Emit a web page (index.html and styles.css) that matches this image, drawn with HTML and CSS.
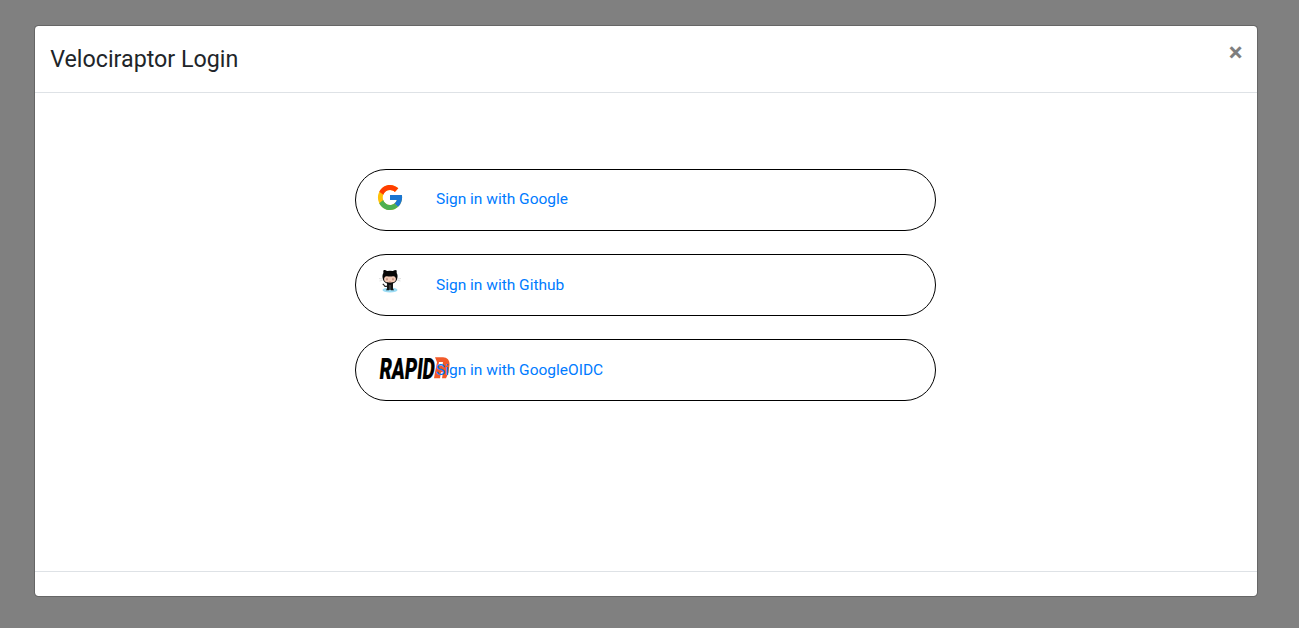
FILE: index.html
```html
<!DOCTYPE html>
<html lang="en">
<head>
<meta charset="utf-8">
<title>Velociraptor Login</title>
<link rel="stylesheet" href="styles.css">
</head>
<body>
<div class="modal" role="dialog" aria-labelledby="title">
  <header class="modal-header">
    <h1 class="modal-title" id="title">Velociraptor Login</h1>
    <button class="close" type="button" aria-label="Close">×</button>
  </header>
  <main class="modal-body">
    <a class="provider" href="#">
      <span class="logo"><svg class="google" viewBox="0.8 -0.8 48 48" width="29" height="30" preserveAspectRatio="none">
        <path fill="#FFC107" d="M43.6 20.1H42V20H24v8h11.300C33.700 32.700 29.200 36 24 36c-6.600 0-12-5.400-12-12s5.400-12 12-12c3.100 0 5.800 1.200 8 3l5.700-5.700C34 6.100 29.300 4 24 4 13 4 4 13 4 24s9 20 20 20 20-9 20-20c0-1.300-.1-2.700-.4-3.900z"/>
        <path fill="#FF3D00" d="M6.300 14.700l6.600 4.800C14.700 15.100 19 12 24 12c3.100 0 5.800 1.200 8 3l5.700-5.700C34 6.100 29.300 4 24 4 16.300 4 9.700 8.300 6.300 14.700z"/>
        <path fill="#4CAF50" d="M24 44c5.200 0 9.900-2 13.400-5.200l-6.200-5.200C29.200 35.100 26.700 36 24 36c-5.200 0-9.600-3.300-11.300-8l-6.500 5C9.500 39.600 16.200 44 24 44z"/>
        <path fill="#1976D2" d="M43.600 20.100H42V20H24v8h11.300c-.8 2.200-2.200 4.200-4.100 5.600l6.200 5.200C37 39.200 44 34 44 24c0-1.300-.1-2.700-.4-3.900z"/>
      </svg></span>
      <span class="label label-raised">Sign in with Google</span>
    </a>
    <a class="provider" href="#">
      <span class="logo"><svg class="github" viewBox="0 0 28 28" width="28" height="28">
        <ellipse cx="14" cy="21" rx="7.500" ry="2.500" fill="#9bdcf5"/>
        <path d="M11 14h6v5.500l1 1.700h-3l-1-1-1 1h-3l1-1.700z" fill="#151515"/>
        <path d="M11 17c-1.500 1-2.600.2-2.900-.8-.3-.8-1-1-1.300-1.300" fill="none" stroke="#222" stroke-width="1.200"/>
        <path d="M7.700 1c1.500 0 2.700.5 3.500 1.100a14 14 0 0 1 5.600 0C17.800 1.400 19 1 20.300 1c.6 1.200.5 2.300.3 3.100 1 1.300 1.100 3 .8 4.700-.6 4.200-3.200 6-7.400 6S7.200 13 6.600 8.800c-.3-1.700-.1-3.400.8-4.700C7.200 3 7.200 2.100 7.700 1z" fill="#080808"/>
        <path d="M10.500 7.300c1-.2 2 .3 3.500.3s2.500-.5 3.500-.3c1.500.3 2.400 1.300 2.400 2.800 0 2.900-2.200 3.500-5.900 3.500s-5.900-.6-5.900-3.500c0-1.500.9-2.500 2.400-2.800z" fill="#f3cbb7"/>
        <ellipse cx="11" cy="10.200" rx=".9" ry="1.300" fill="#c79586"/><ellipse cx="17" cy="10.200" rx=".9" ry="1.300" fill="#c79586"/>
        <path d="M12.800 12.600h2.400" stroke="#c88475" stroke-width=".6"/>
        <path d="M3 9.500l3.500.6M3.500 12l3-.7M25 9.500l-3.500.6M24.500 12l-3-.7" stroke="#ccc" stroke-width=".6"/>
        <path d="M14 16v4" stroke="#777" stroke-width=".8"/>
      </svg></span>
      <span class="label">Sign in with Github</span>
    </a>
    <a class="provider" href="#">
      <span class="logo"><svg class="rapid" viewBox="0 -6 76 40" width="76" height="40">
        <text class="rapid-text" transform="translate(2.800 23.500) skewX(-6) scale(.665 1)" textLength="83" lengthAdjust="spacingAndGlyphs">RAPID</text>
        <path fill="#f15a29" fill-rule="evenodd" d="M59 2.300h8c4 0 7 3 6.500 7.500l-.5 4-.5 4-2.500 5.500h-4l1-6h-2l-1 6h-6l1-6 2-10zM63 7l-.6 3.500h4L67 7z"/>
      </svg></span>
      <span class="label">Sign in with GoogleOIDC</span>
    </a>
  </main>
  <footer class="modal-footer"></footer>
</div>
</body>
</html>
```
FILE: styles.css
```css
* { box-sizing: border-box; }

body {
  margin: 0;
  height: 628px;
  padding: 25px 41px 31px 34px;
  overflow: hidden;
  background: #808080;
  color: #212529;
  font: 15.5px/1.5 Roboto, sans-serif;
}

.modal {
  display: flex;
  flex-direction: column;
  height: 572px;
  border: 1px solid rgba(0, 0, 0, .2);
  border-radius: 4.650px;
  background: #fff;
  background-clip: padding-box;
}

.modal-header {
  display: flex;
  justify-content: space-between;
  align-items: flex-start;
  height: 67px;
  padding: 15.500px;
  border-bottom: 1px solid #dee2e6;
}

.modal-title {
  margin: 0 0 0 -.300px;
  font-size: 23.250px;
  font-weight: 400;
  line-height: 35px;
}

.close {
  margin-right: -1px;
  padding: 0;
  border: 0;
  background: none;
  color: #000;
  opacity: .5;
  font: 700 26px/20px Roboto, sans-serif;
}

.modal-body {
  flex: 1;
  display: flex;
  flex-direction: column;
  align-items: center;
  gap: 23px;
  padding: 76px 1px 0 0;
}

.provider {
  display: flex;
  align-items: flex-start;
  width: 581px;
  height: 62px;
  padding-left: 20px;
  border: 1px solid #000;
  border-radius: 31px;
  color: #007bff;
  text-decoration: none;
}

.logo {
  flex: 0 0 60px;
  min-width: 0;
  height: 60px;
  padding-top: 12px;
}

.logo svg { display: block; }
.github { margin-top: 2px; }
.rapid { margin-top: -3px; }

.rapid-text {
  fill: #000;
  stroke: #000;
  stroke-width: .2px;
  font: 900 29.500px Roboto, sans-serif;
}

.label {
  position: relative;
  line-height: 60px;
}

.label-raised { line-height: 58px; }

.modal-footer {
  height: 25px;
  border-top: 1px solid #dee2e6;
}
```
